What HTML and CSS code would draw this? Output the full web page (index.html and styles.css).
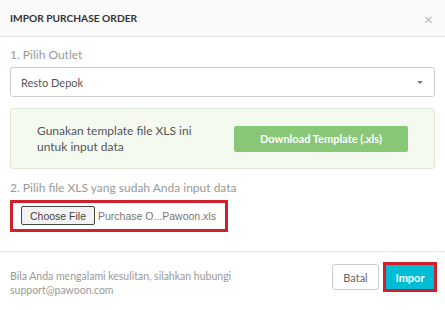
FILE: index.html
```html
<!DOCTYPE html>
<html lang="id">
<head>
    <meta charset="UTF-8">
    <meta name="viewport" content="width=device-width, initial-scale=1.0">
    <title>Impor Purchase Order</title>
    <link rel="stylesheet" href="styles.css">
</head>
<body>
    <div class="modal">
        <header class="modal-header">
            <h1>IMPOR PURCHASE ORDER</h1>
            <span class="close">&times;</span>
        </header>
        <main class="modal-body">
            <p class="step">1. Pilih Outlet</p>
            <div class="select">
                <span>Resto Depok</span>
                <span class="caret"></span>
            </div>
            <div class="template-box">
                <p>Gunakan template file XLS ini untuk input data</p>
                <button class="btn-download">Download Template (.xls)</button>
            </div>
            <p class="step">2. Pilih file XLS yang sudah Anda input data</p>
            <div class="file-box">
                <button class="btn-file">Choose File</button>
                <span class="file-name">Purchase O...Pawoon.xls</span>
            </div>
        </main>
        <footer class="modal-footer">
            <p>Bila Anda mengalami kesulitan, silahkan hubungi support@pawoon.com</p>
            <div class="actions">
                <button class="btn-cancel">Batal</button>
                <span class="mark"><button class="btn-import">Impor</button></span>
            </div>
        </footer>
    </div>
</body>
</html>
```

FILE: styles.css
```css
body {
    margin: 0;
    font-family: Lato, "Open Sans", sans-serif;
    background-color: #fff;
}

p {
    margin: 0;
}

button {
    font-family: inherit;
    cursor: pointer;
}

.modal {
    width: 445px;
}

.modal-header {
    height: 37px;
    box-sizing: border-box;
    padding: 0 10px;
    display: flex;
    align-items: center;
    justify-content: space-between;
    background-color: #fafafa;
    border-bottom: 1px solid #e5e5e5;
}

.modal-header h1 {
    margin: 0;
    font-size: 10.2px;
    font-weight: 700;
    color: #333;
}

.close {
    font-size: 16px;
    color: #bbb;
    margin-right: 2px;
}

.modal-body {
    padding: 10px 10px 19px;
}

.step {
    font-size: 12px;
    line-height: 16px;
    color: #999;
    margin-bottom: 4px;
}

.select {
    height: 30px;
    box-sizing: border-box;
    border: 1px solid #ccc;
    border-radius: 3px;
    padding: 0 10px;
    display: flex;
    align-items: center;
    justify-content: space-between;
    font-size: 11px;
    color: #555;
}

.caret {
    width: 0;
    height: 0;
    border-left: 3px solid transparent;
    border-right: 3px solid transparent;
    border-top: 3px solid #777;
    margin-right: 1px;
}

.template-box {
    margin: 11px 0;
    height: 61px;
    box-sizing: border-box;
    padding: 0 26px;
    display: grid;
    grid-template-columns: 1fr 174px;
    align-items: center;
    background-color: #f5faf1;
    border: 1px solid #dfe9d8;
    border-radius: 3px;
}

.template-box p {
    font-size: 12px;
    line-height: 16px;
    color: #555;
    width: 160px;
}

.btn-download {
    height: 26px;
    border: none;
    border-radius: 2px;
    background-color: #88c776;
    color: #fff;
    font-size: 11px;
    font-weight: 700;
}

.file-box {
    display: flex;
    width: fit-content;
    align-items: center;
    gap: 3px;
    padding: 3px 9px 4px 8px;
    border: 3px solid #d0202c;
    font-family: "Liberation Sans", Arial, sans-serif;
    font-size: 10.5px;
}

.btn-file {
    height: 19px;
    padding: 0 8px;
    font-family: inherit;
    font-size: 10.5px;
    color: #444;
    background-color: #f3f3f3;
    border: 1px solid #444;
    border-radius: 2px;
}

.file-name {
    color: #777;
}

.modal-footer {
    border-top: 1px solid #e5e5e5;
    padding: 10px 8px 10px 10px;
    display: flex;
    justify-content: space-between;
    align-items: flex-start;
}

.modal-footer p {
    width: 240px;
    margin-top: 7px;
    font-size: 10.5px;
    line-height: 14px;
    color: #999;
}

.actions {
    display: flex;
    align-items: center;
    gap: 4px;
}

.btn-cancel {
    width: 47px;
    height: 26px;
    background-color: #fff;
    border: 1px solid #ccc;
    border-radius: 3px;
    color: #666;
    font-size: 11px;
}

.mark {
    display: block;
    border: 3px solid #d0202c;
}

.btn-import {
    display: block;
    width: 48px;
    height: 24px;
    border: none;
    background-color: #00bcd4;
    color: #fff;
    font-size: 11px;
    font-weight: 700;
}
```
